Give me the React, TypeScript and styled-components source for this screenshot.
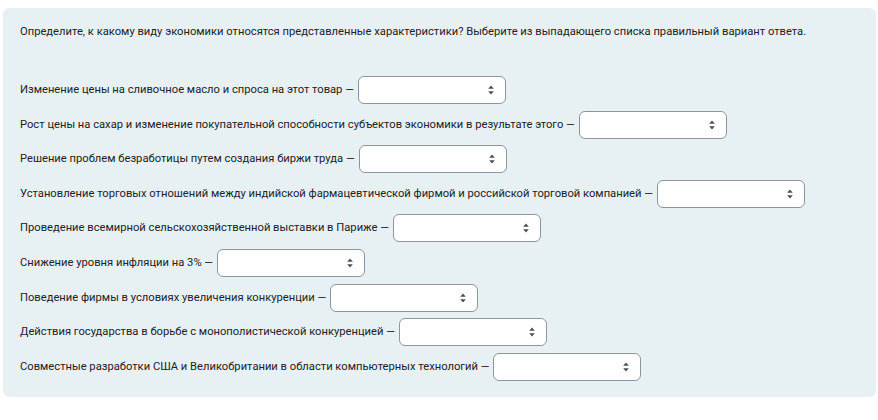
import React from 'react';
import styled, { createGlobalStyle } from 'styled-components';


// Style
const GlobalStyle = createGlobalStyle`
  body {
    margin: 0;
    background: #fff;
    font-family: Roboto, "Liberation Sans", Arial, sans-serif;
    color: #1d2125;
  }
`;

const Panel = styled.div`
  margin: 8px 2px 0 3px;
  padding: 16px 17px 15px;
  background: #e7f1f4;
  border-radius: 6px;
  font-size: 11.2px;
  line-height: 16px;
  box-sizing: border-box;
  height: 389px;
`;

const Intro = styled.p`
  margin: 0 0 36px;
`;

const Row = styled.div`
  display: flex;
  align-items: center;
  height: 28px;
  margin-bottom: 6.6px;
  white-space: nowrap;
`;

const SelectBox = styled.div`
  position: relative;
  margin-left: 4px;
  width: 148px;
  height: 28px;
  box-sizing: border-box;
  border: 1px solid #8f959e;
  border-radius: 6px;
  background: #fff;

  select {
    appearance: none;
    width: 100%;
    height: 100%;
    border: 0;
    background: transparent;
    outline: none;
  }

  svg {
    position: absolute;
    right: 11px;
    top: 8px;
    pointer-events: none;
  }
`;


const items = [
  'Изменение цены на сливочное масло и спроса на этот товар',
  'Рост цены на сахар и изменение покупательной способности субъектов экономики в результате этого',
  'Решение проблем безработицы путем создания биржи труда',
  'Установление торговых отношений между индийской фармацевтической фирмой и российской торговой компанией',
  'Проведение всемирной сельскохозяйственной выставки в Париже',
  'Снижение уровня инфляции на 3%',
  'Поведение фирмы в условиях увеличения конкуренции',
  'Действия государства в борьбе с монополистической конкуренцией',
  'Совместные разработки США и Великобритании в области компьютерных технологий',
];


// Component
function Dropdown() {
  return (
    <SelectBox>
      <select defaultValue="">
        <option value=""></option>
      </select>
      <svg width="6" height="10" viewBox="0 0 6 10">
        <path d="M3 0.5 L5.8 3.8 H0.2 Z" fill="#495057" />
        <path d="M3 9.5 L5.8 6.2 H0.2 Z" fill="#495057" />
      </svg>
    </SelectBox>
  );
}

function App() {
  return (
    <>
      <GlobalStyle />
      <Panel>
        <Intro>
          Определите, к какому виду экономики относятся представленные характеристики? Выберите из выпадающего списка правильный вариант ответа.
        </Intro>
        {items.map((text) => (
          <Row key={text}>
            {text} —
            <Dropdown />
          </Row>
        ))}
      </Panel>
    </>
  );
}

export default App;
